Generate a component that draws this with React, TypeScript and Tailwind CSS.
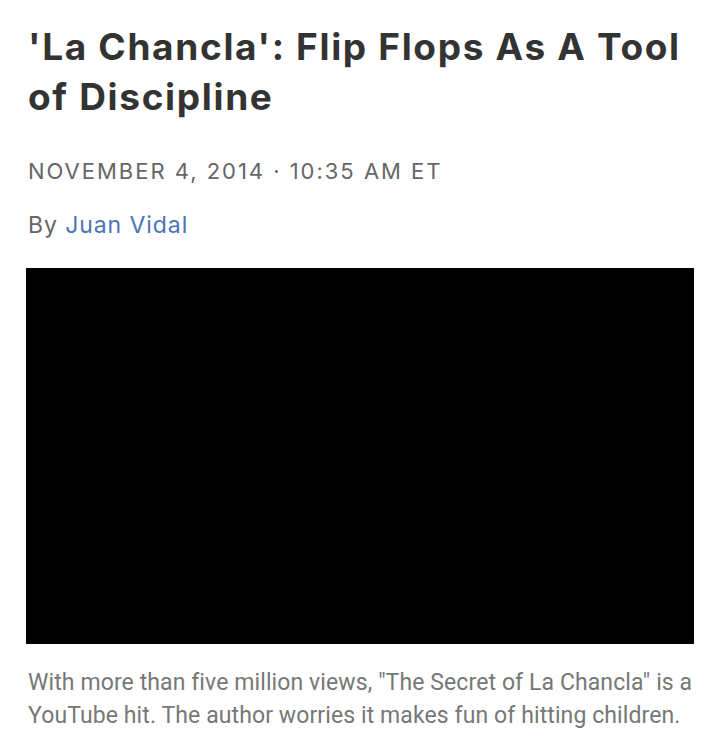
export default function App() {
  return (
    <div className="min-h-[736px] bg-white px-[26px] pt-[22px]">
      <h1 className="pl-[2px] font-['Inter',sans-serif] text-[37px] font-bold leading-[50px] tracking-[0.045em] text-[#333]">
        'La Chancla': Flip Flops As A Tool of Discipline
      </h1>
      <p className="mt-[34px] pl-[2px] font-['Inter',sans-serif] text-[22px] leading-[30px] tracking-[0.09em] text-[#666]">
        NOVEMBER 4, 2014 · 10:35 AM ET
      </p>
      <p className="mt-[24px] pl-[2px] font-['Inter',sans-serif] text-[23px] leading-[30px] tracking-[0.04em] text-[#666]">
        By <a className="text-[#4a74b8]">Juan Vidal</a>
      </p>
      <div className="mt-[28px] h-[376px] w-[668px] bg-black" />
      <p className="mt-[22px] pl-[2px] font-['Roboto',sans-serif] text-[23px] leading-[33px] tracking-[0.1px] text-[#777]">
        With more than five million views, "The Secret of La Chancla" is a YouTube hit. The author worries it makes fun of hitting children.
      </p>
    </div>
  );
}
